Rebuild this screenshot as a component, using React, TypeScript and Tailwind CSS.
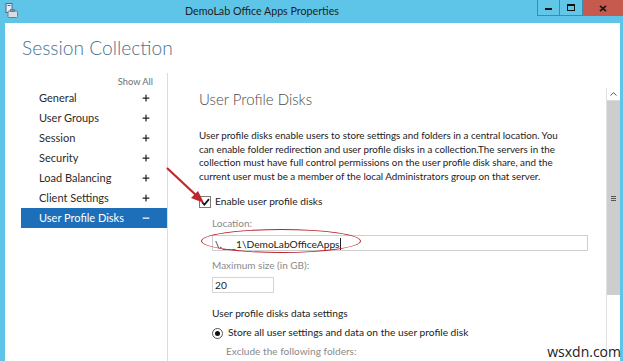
import { Plus, Minus } from 'lucide-react'

const navItems = [
  'General',
  'User Groups',
  'Session',
  'Security',
  'Load Balancing',
  'Client Settings',
]

const paragraph = [
  'User profile disks enable users to store settings and folders in a central location. You',
  'can enable folder redirection and user profile disks in a collection.The servers in the',
  'collection must have full control permissions on the user profile disk share, and the',
  'current user must be a member of the local Administrators group on that server.',
]

function TitleBar() {
  return (
    <div className="flex h-[23px] shrink-0 items-start">
      <svg className="ml-[5px] mt-[3px] shrink-0" width="13" height="15" viewBox="0 0 13 15">
        <rect x="1" y="0.5" width="6" height="9" fill="#e8eef4" stroke="#4a6a8a" />
        <rect x="2.5" y="2" width="3" height="1" fill="#4a6a8a" />
        <rect x="3" y="8" width="9.5" height="6.5" rx="1" fill="#d8dde2" stroke="#6b7f92" />
        <rect x="5.5" y="6.5" width="4" height="2" fill="none" stroke="#6b7f92" />
      </svg>
      <div className="ml-[167px] flex h-[23px] flex-1 items-center text-[10.7px] text-[#1d1d1d]">DemoLab Office Apps Properties</div>
      <div className="flex shrink-0">
        <div className="flex h-[16px] w-[23px] items-center justify-center border-x border-b border-[#3a8cb0] bg-[#62c6e9]">
          <div className="mt-[3px] h-[2px] w-[7px] bg-[#111]" />
        </div>
        <div className="flex h-[16px] w-[23px] items-center justify-center border-r border-b border-[#3a8cb0] bg-[#62c6e9]">
          <div className="h-[7px] w-[8px] border border-t-2 border-[#111]" />
        </div>
        <div className="flex h-[16px] w-[40px] items-center justify-center bg-[#c75a4e]">
          <svg width="8" height="7" viewBox="0 0 8 7">
            <path d="M1 0.8 L7 6.2 M7 0.8 L1 6.2" stroke="#1a1a1a" strokeWidth="1.8" />
          </svg>
        </div>
      </div>
    </div>
  )
}

function Nav() {
  return (
    <div className="ml-[16px] flex w-[147px] shrink-0 flex-col border-r border-[#dcdcdc]">
      <div className="flex h-[15px] items-center justify-end pr-[14px] pt-[3px] text-[9.3px] text-[#6f6f6f]">
        Show All
      </div>
      {navItems.map((item) => (
        <div key={item} className="flex h-[20px] items-center justify-between pl-[18px] pr-[16px] text-[11px] text-[#2b2b2b]">
          <span>{item}</span>
          <Plus size={10} strokeWidth={3} className="text-[#222]" />
        </div>
      ))}
      <div className="flex h-[20px] items-center justify-between bg-[#1d6fb9] pl-[18px] pr-[16px] text-[11px] text-white">
        <span>User Profile Disks</span>
        <Minus size={10} strokeWidth={3} />
      </div>
    </div>
  )
}

function Checkbox() {
  return (
    <div className="flex h-[12px] w-[12px] items-center justify-center border border-[#7a7a7a] bg-white">
      <svg width="9" height="8" viewBox="0 0 9 8">
        <path d="M1 4.2 L3.4 6.6 L8 1.2" fill="none" stroke="#1a1a1a" strokeWidth="1.8" />
      </svg>
    </div>
  )
}

function Scrollbar() {
  return (
    <div className="flex w-[14px] shrink-0 flex-col border-l border-[#e0e0e0] bg-white">
      <div className="flex h-[13px] items-center justify-center border-b border-[#dadada]">
        <svg width="7" height="4" viewBox="0 0 7 4">
          <path d="M0.5 3.5 L3.5 0.7 L6.5 3.5" fill="none" stroke="#555" strokeWidth="1" />
        </svg>
      </div>
      <div className="flex h-[194px] flex-col items-center justify-center gap-[1px] bg-[#cdcdcd]">
        <div className="h-px w-[5px] bg-[#555]" />
        <div className="h-px w-[5px] bg-[#555]" />
        <div className="h-px w-[5px] bg-[#555]" />
      </div>
    </div>
  )
}

function Content() {
  return (
    <div className="flex min-w-0 flex-1 pt-[15px]">
      <div className="min-w-0 flex-1 overflow-hidden pl-[31px]">
        <div className="h-[22px] text-[15px] font-light leading-[22px] text-[#4a4a4a]">User Profile Disks</div>
        <div className="mt-[19px] text-[9.8px] leading-[13.5px] text-[#222]">
          {paragraph.map((line) => (
            <div key={line} className="whitespace-nowrap">{line}</div>
          ))}
        </div>
        <div className="mt-[12px] flex h-[14px] items-center gap-[4px]">
          <Checkbox />
          <span className="text-[10.2px] text-[#222]">Enable user profile disks</span>
        </div>
        <div className="pl-[13px]">
          <div className="mt-[6px] h-[16px] text-[10px] leading-[16px] text-[#8a8a8a]">Location:</div>
          <div className="relative mt-[4px] h-[16px] w-[376px] border border-[#cfcfcf] pl-[2px] text-[10.2px] leading-[14px] text-[#222]">
            {'\\.___1\\DemoLabOfficeApps'}
            <span className="inline-block h-[12px] w-px translate-y-[2px] bg-[#222]" />
            <div className="absolute left-[-12px] top-[-7px] h-[24px] w-[160px] rounded-[50%] border-[1.5px] border-[#b8232c]" />
          </div>
          <div className="mt-[6px] h-[16px] text-[10px] leading-[16px] text-[#8a8a8a]">Maximum size (in GB):</div>
          <div className="mt-[4px] h-[16px] w-[62px] border border-[#d5d5d5] pl-[2px] text-[10.2px] leading-[14px] text-[#222]">
            20
          </div>
          <div className="mt-[12px] h-[16px] text-[10.2px] leading-[16px] text-[#222]">User profile disks data settings</div>
          <div className="mt-[4px] flex h-[16px] items-center gap-[5px]">
            <div className="flex h-[11px] w-[11px] items-center justify-center rounded-full border border-[#555] bg-white">
              <div className="h-[5px] w-[5px] rounded-full bg-[#111]" />
            </div>
            <span className="text-[10.2px] text-[#222]">Store all user settings and data on the user profile disk</span>
          </div>
          <div className="mt-[2px] pl-[14px] text-[10.1px] leading-[16px] text-[#8a8a8a]">Exclude the following folders:</div>
        </div>
      </div>
      <Scrollbar />
    </div>
  )
}

export default function App() {
  return (
    <div
      className="relative flex h-[361px] w-[623px] flex-col overflow-hidden bg-[#5fc5e8]"
      style={{ fontFamily: 'Lato, "Open Sans", sans-serif' }}
    >
      <TitleBar />
      <div className="ml-[5px] mr-[3px] flex flex-1 flex-col bg-white">
        <div className="flex h-[50px] shrink-0 items-center pl-[17px] text-[19.2px] font-light text-[#46728f]">
          Session Collection
        </div>
        <div className="flex flex-1">
          <Nav />
          <Content />
        </div>
      </div>
      <svg className="absolute left-0 top-0" width="623" height="361" viewBox="0 0 623 361" pointerEvents="none">
        <line x1="167" y1="168" x2="198" y2="197" stroke="#c0262d" strokeWidth="2.2" />
        <path d="M204 203 L191 198 L198 191 Z" fill="#c0262d" />
      </svg>
      <div className="absolute bottom-[1px] right-[2px] text-[14px] leading-[16px] text-[#222]" style={{ fontFamily: '"Open Sans", sans-serif' }}>
        wsxdn.com
      </div>
    </div>
  )
}
